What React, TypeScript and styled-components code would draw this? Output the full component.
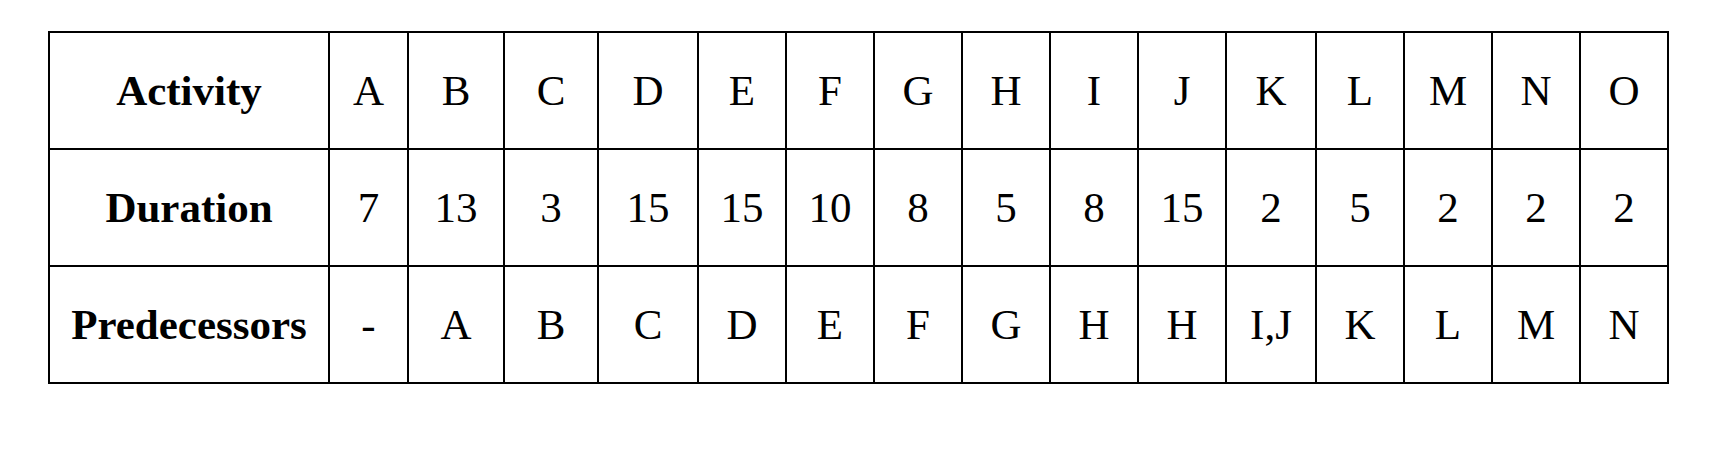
import React from "react";
import styled, { createGlobalStyle } from "styled-components";

const GlobalStyle = createGlobalStyle`
  html, body {
    margin: 0;
    padding: 0;
    background: #ffffff;
  }
`;

const Page = styled.div`
  width: 1734px;
  height: 460px;
  padding: 31px 0 0 48px;
  box-sizing: border-box;
  font-family: "Liberation Serif", "Times New Roman", serif;
  color: #000;
`;

const Table = styled.table`
  border-collapse: collapse;
  table-layout: fixed;
  width: 1620px;
`;

const Row = styled.tr`
  height: 117px;
`;

const Cell = styled.td<{ $label?: boolean }>`
  border: 2px solid #000;
  padding: 0;
  text-align: center;
  vertical-align: middle;
  font-size: 43px;
  font-weight: ${({ $label }) => ($label ? 700 : 400)};
  line-height: 1.15;
`;

const activities = ["A", "B", "C", "D", "E", "F", "G", "H", "I", "J", "K", "L", "M", "N", "O"];
const durations = ["7", "13", "3", "15", "15", "10", "8", "5", "8", "15", "2", "5", "2", "2", "2"];
const predecessors = ["-", "A", "B", "C", "D", "E", "F", "G", "H", "H", "I,J", "K", "L", "M", "N"];
const widths = [280, 79, 96, 94, 100, 88, 88, 88, 88, 88, 88, 90, 88, 88, 88, 88];

const rows: [string, string[]][] = [
  ["Activity", activities],
  ["Duration", durations],
  ["Predecessors", predecessors],
];

export default function App() {
  return (
    <>
      <GlobalStyle />
      <Page>
        <Table>
          <colgroup>
            {widths.map((w, i) => (
              <col key={i} style={{ width: w }} />
            ))}
          </colgroup>
          <tbody>
            {rows.map(([label, values]) => (
              <Row key={label}>
                <Cell $label>{label}</Cell>
                {values.map((v, i) => (
                  <Cell key={i}>{v}</Cell>
                ))}
              </Row>
            ))}
          </tbody>
        </Table>
      </Page>
    </>
  );
}
